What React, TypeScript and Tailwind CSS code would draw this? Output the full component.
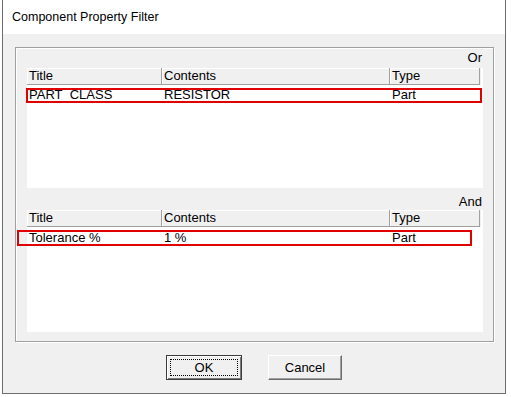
import React from "react";

const cols = ["w-[135px]", "w-[228px]", "w-[90px]"];

function ListHeader() {
  return (
    <div className="flex h-[17px] w-[454px] bg-[#f0f0f0]">
      {["Title", "Contents", "Type"].map((t, i) => (
        <div
          key={t}
          className={`${cols[i]} flex items-center pl-[2px] border-r border-b border-[#a0a0a0] shadow-[inset_1px_1px_0_#ffffff]`}
        >
          {t}
        </div>
      ))}
    </div>
  );
}

function ListRow({ cells, offset }: { cells: string[]; offset: string }) {
  return (
    <div className={`flex h-[18px] w-[454px] ${offset}`}>
      {cells.map((c, i) => (
        <div key={i} className={`${cols[i]} flex items-center pl-[2px] whitespace-pre`}>
          {c}
        </div>
      ))}
    </div>
  );
}

export default function App() {
  return (
    <div className="w-[511px] h-[397px] bg-white font-['Liberation_Sans',Arial,sans-serif] text-[13px] text-black">
      <div className="ml-[2px] w-[504px] h-[394px] flex flex-col border-x border-b border-[#6d6d6d]">
        {/* Title bar */}
        <div className="h-[34px] flex items-center pl-[9px] bg-white text-[12.5px]">
          Component Property Filter
        </div>

        {/* Body */}
        <div className="flex-1 bg-[#f0f0f0] flex flex-col">
          <div className="relative ml-[12px] mt-[13px] w-[479px] h-[295px] border border-[#a0a0a0] shadow-[inset_1px_1px_0_#ffffff,1px_1px_0_#ffffff] pl-[11px] flex flex-col">
            <div className="h-[20px] w-[456px] flex items-center justify-end pr-[1px]">Or</div>
            <div className="h-[120px] w-[456px] bg-white">
              <ListHeader />
              <ListRow offset="mt-[1px]" cells={["PART_CLASS", "RESISTOR", "Part"]} />
            </div>
            <div className="h-[22px] w-[456px] flex items-end justify-end pr-[1px] pb-[1px] leading-[14px]">And</div>
            <div className="h-[122px] w-[456px] bg-white">
              <ListHeader />
              <ListRow offset="mt-[2px]" cells={["Tolerance %", "1 %", "Part"]} />
            </div>

            {/* highlight boxes */}
            <div className="absolute left-[10px] top-[40px] w-[456px] h-[15px] border-2 border-[#e00000]" />
            <div className="absolute left-[1px] top-[182px] w-[455px] h-[16px] border-2 border-[#e00000]" />
          </div>

          {/* Buttons */}
          <div className="mt-[13px] flex justify-center gap-[26px]">
            <button className="w-[76px] h-[25px] p-[3px] bg-[#f0f0f0] border border-[#3c3c3c] shadow-[inset_1px_1px_0_#ffffff,inset_-1px_-1px_0_#7a7a7a]">
              <div className="w-full h-full flex items-center justify-center border border-dotted border-black">
                OK
              </div>
            </button>
            <button className="w-[74px] h-[25px] bg-[#f0f0f0] border border-t-white border-l-white border-r-[#6d6d6d] border-b-[#6d6d6d] shadow-[inset_-1px_-1px_0_#a0a0a0] flex items-center justify-center">
              Cancel
            </button>
          </div>
        </div>
      </div>
    </div>
  );
}
